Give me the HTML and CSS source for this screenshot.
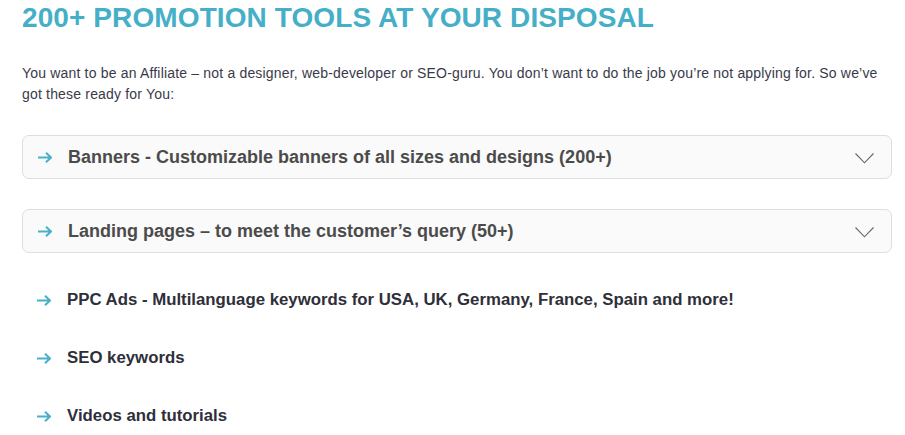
FILE: index.html
```html
<!DOCTYPE html>
<html>
<head>
<meta charset="utf-8">
<link rel="stylesheet" href="styles.css">
</head>
<body>
<div class="page">
  <h1 class="title">200+ PROMOTION TOOLS AT YOUR DISPOSAL</h1>
  <p class="intro">You want to be an Affiliate – not a designer, web-developer or SEO-guru. You don’t want to do the job you’re not applying for. So we’ve got these ready for You:</p>

  <div class="acc">
    <div class="acc-row">
      <svg class="arrow" width="14" height="11" viewBox="0 0 14 11"><path d="M0 5.5H13M8 0.8L13 5.5L8 10.2" fill="none" stroke="#47b1c9" stroke-width="2"/></svg>
      <span class="acc-text">Banners - Customizable banners of all sizes and designs (200+)</span>
      <svg class="chev" width="19" height="11" viewBox="0 0 19 11"><path d="M0.5 0.5L9.5 9.8L18.5 0.5" fill="none" stroke="#666" stroke-width="1.1"/></svg>
    </div>
  </div>

  <div class="acc">
    <div class="acc-row">
      <svg class="arrow" width="14" height="11" viewBox="0 0 14 11"><path d="M0 5.5H13M8 0.8L13 5.5L8 10.2" fill="none" stroke="#47b1c9" stroke-width="2"/></svg>
      <span class="acc-text">Landing pages – to meet the customer’s query (50+)</span>
      <svg class="chev" width="19" height="11" viewBox="0 0 19 11"><path d="M0.5 0.5L9.5 9.8L18.5 0.5" fill="none" stroke="#666" stroke-width="1.1"/></svg>
    </div>
  </div>

  <ul class="list">
    <li class="item">
      <svg class="arrow" width="14" height="11" viewBox="0 0 14 11"><path d="M0 5.5H13M8 0.8L13 5.5L8 10.2" fill="none" stroke="#47b1c9" stroke-width="2"/></svg>
      <span>PPC Ads - Multilanguage keywords for USA, UK, Germany, France, Spain and more!</span>
    </li>
    <li class="item">
      <svg class="arrow" width="14" height="11" viewBox="0 0 14 11"><path d="M0 5.5H13M8 0.8L13 5.5L8 10.2" fill="none" stroke="#47b1c9" stroke-width="2"/></svg>
      <span>SEO keywords</span>
    </li>
    <li class="item">
      <svg class="arrow" width="14" height="11" viewBox="0 0 14 11"><path d="M0 5.5H13M8 0.8L13 5.5L8 10.2" fill="none" stroke="#47b1c9" stroke-width="2"/></svg>
      <span>Videos and tutorials</span>
    </li>
  </ul>
</div>
</body>
</html>
```

FILE: styles.css
```css
html, body {
  margin: 0;
  padding: 0;
  background: #fff;
}
body {
  font-family: Arial, "Liberation Sans", Helvetica, sans-serif;
}
.page {
  padding: 2px 13px 0 22px;
}
.title {
  margin: 0;
  font-size: 28px;
  line-height: 32px;
  font-weight: bold;
  letter-spacing: 0.1px;
  color: #45afc8;
}
.intro {
  margin: 29px 0 0;
  font-size: 14px;
  line-height: 21px;
  letter-spacing: 0.18px;
  color: #3a3a4a;
}
.acc {
  margin-top: 30px;
  border: 1px solid #dedede;
  border-radius: 7px;
  background: #fafafa;
}
.acc + .acc {
  margin-top: 30px;
}
.acc-row {
  display: flex;
  align-items: center;
  height: 42px;
  padding: 0 17px 0 15px;
}
.arrow {
  flex: none;
  display: block;
}
.acc-row .arrow {
  margin-right: 16px;
}
.acc-text {
  flex: 1;
  font-size: 18px;
  font-weight: bold;
  color: #4b4b4b;
}
.chev {
  flex: none;
  display: block;
  margin-top: 3px;
}
.list {
  list-style: none;
  margin: 18px 0 0;
  padding: 0;
}
.item {
  display: flex;
  align-items: center;
  height: 58px;
  padding-left: 15px;
  font-size: 16.8px;
  font-weight: bold;
  color: #2f2f3a;
}
.item .arrow {
  margin-right: 16px;
}
```
